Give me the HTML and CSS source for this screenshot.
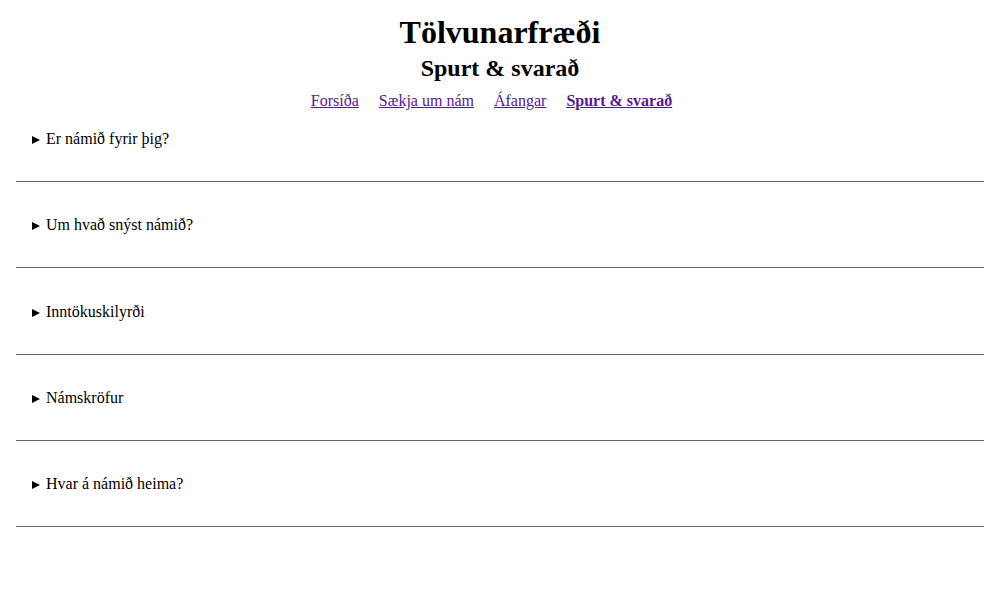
FILE: index.html
```html
<!DOCTYPE html>
<html lang="is">
<head>
<meta charset="utf-8">
<title>Tölvunarfræði – Spurt &amp; svarað</title>
<link rel="stylesheet" href="styles.css">
</head>
<body>
<header class="site-header">
  <h1 class="title">Tölvunarfræði</h1>
  <h2 class="subtitle">Spurt &amp; svarað</h2>
  <nav class="nav">
    <a class="nav-link" href="#">Forsíða</a>
    <a class="nav-link" href="#">Sækja um nám</a>
    <a class="nav-link" href="#">Áfangar</a>
    <a class="nav-link active" href="#">Spurt &amp; svarað</a>
  </nav>
</header>
<main class="faq">
  <details class="faq-item"><summary class="faq-question">Er námið fyrir þig?</summary><p>Svar.</p></details>
  <hr class="divider">
  <details class="faq-item"><summary class="faq-question">Um hvað snýst námið?</summary><p>Svar.</p></details>
  <hr class="divider">
  <details class="faq-item"><summary class="faq-question">Inntökuskilyrði</summary><p>Svar.</p></details>
  <hr class="divider">
  <details class="faq-item"><summary class="faq-question">Námskröfur</summary><p>Svar.</p></details>
  <hr class="divider">
  <details class="faq-item"><summary class="faq-question">Hvar á námið heima?</summary><p>Svar.</p></details>
  <hr class="divider">
</main>
</body>
</html>
```
FILE: styles.css
```css
html, body {
  margin: 0;
  padding: 0;
  background: #fff;
}
body {
  font-family: "Liberation Serif", "Times New Roman", serif;
  font-size: 16px;
  color: #000;
}
.site-header {
  padding-top: 14px;
  text-align: center;
}
.title {
  margin: 0;
  font-size: 32px;
  font-weight: bold;
}
.subtitle {
  margin: 4px 0 0;
  font-size: 24px;
  font-weight: bold;
}
.nav {
  display: flex;
  justify-content: center;
  gap: 20px;
  margin-top: 10px;
  padding-right: 17px;
}
.nav-link {
  color: #551a8b;
  text-decoration: underline;
}
.nav-link.active {
  font-weight: bold;
}
.faq {
  padding: 20px 16px 0;
}
.faq-item {
  padding: 0 16px;
}
.faq-question {
  display: block;
  list-style: none;
  cursor: pointer;
}
.faq-question::-webkit-details-marker {
  display: none;
}
.faq-question::before {
  content: "";
  display: inline-block;
  width: 0;
  height: 0;
  border-top: 4px solid transparent;
  border-bottom: 4px solid transparent;
  border-left: 8px solid #000;
  margin-right: 6px;
  vertical-align: 0;
}
.divider {
  margin: 33px 0 34.3px;
  border: none;
  border-top: 1px solid #666;
  height: 0;
}
```
